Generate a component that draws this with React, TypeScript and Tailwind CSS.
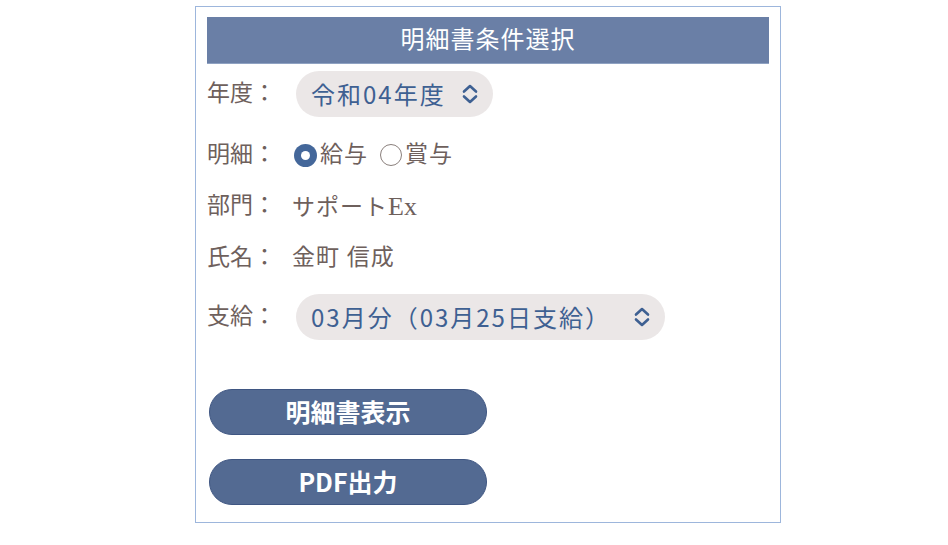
const serif = "font-['Liberation_Serif','Noto_Sans_CJK_JP',serif]";
const sans = "font-['Noto_Sans_CJK_JP','Liberation_Sans',sans-serif]";

const Chevrons = () => (
  <svg width="18" height="22" viewBox="0 0 18 22" fill="none">
    <path d="M3 8.5 L9 3 L15 8.5" stroke="#3e6092" strokeWidth="2.6" strokeLinecap="round" strokeLinejoin="round" />
    <path d="M3 13.5 L9 19 L15 13.5" stroke="#3e6092" strokeWidth="2.6" strokeLinecap="round" strokeLinejoin="round" />
  </svg>
);

const Label = ({ text }: { text: string }) => (
  <div className={`w-[85px] shrink-0 text-[23px] text-[#6e605c] ${serif}`}>{text}：</div>
);

const Select = ({ value, gap }: { value: string; gap: string }) => (
  <div className={`flex items-center h-[46px] rounded-full bg-[#ebe7e7] pl-[15px] pr-[14px] ml-[4px] ${gap}`}>
    <span className={`text-[24px] tracking-[2px] text-[#3e6092] ${sans}`}>{value}</span>
    <Chevrons />
  </div>
);

export default function App() {
  return (
    <div className="pt-[6px] pl-[195px]">
      <div className="w-[586px] h-[517px] border border-[#9db6dc] bg-white px-[11px] pt-[10px]">
        <div className={`h-[47px] bg-[#6a7fa6] border-b border-[#8fa2c2] flex items-center justify-center text-white text-[24px] tracking-[1px] ${serif}`}>
          明細書条件選択
        </div>

        <div className="flex items-center h-[46px] mt-[7px]">
          <Label text="年度" />
          <Select value="令和04年度" gap="gap-[15px]" />
        </div>

        <div className="flex items-center h-[30px] mt-[23px]">
          <Label text="明細" />
          <div className={`flex items-center text-[23px] tracking-[1px] text-[#6e605c] ${serif}`}>
            <span className="ml-[2px] w-[23px] h-[23px] rounded-full bg-[#44679a] flex items-center justify-center">
              <span className="w-[9px] h-[9px] rounded-full bg-white" />
            </span>
            <span className="ml-[3px]">給与</span>
            <span className="ml-[12px] w-[22px] h-[22px] rounded-full border-[1.5px] border-[#8a7f7c]" />
            <span className="ml-[3px]">賞与</span>
          </div>
        </div>

        <div className="flex items-center h-[30px] mt-[21px]">
          <Label text="部門" />
          <span className={`text-[23px] tracking-[1px] text-[#6e605c] ${serif}`}>
            サポート<span className="text-[26px] tracking-normal">Ex</span>
          </span>
        </div>

        <div className="flex items-center h-[30px] mt-[22px]">
          <Label text="氏名" />
          <span className={`text-[23px] tracking-[1px] text-[#6e605c] ${serif}`}>金町 信成</span>
        </div>

        <div className="flex items-center h-[46px] mt-[21px]">
          <Label text="支給" />
          <Select value="03月分（03月25日支給）" gap="gap-[22px]" />
        </div>

        <div className="flex flex-col gap-[24px] mt-[49px] ml-[2px]">
          <button className={`w-[278px] h-[46px] rounded-full bg-[#536a92] border border-[#3f5682] text-white font-bold text-[25px] ${sans}`}>
            明細書表示
          </button>
          <button className={`w-[278px] h-[46px] rounded-full bg-[#536a92] border border-[#3f5682] text-white font-bold text-[25px] ${sans}`}>
            PDF出力
          </button>
        </div>
      </div>
    </div>
  );
}
